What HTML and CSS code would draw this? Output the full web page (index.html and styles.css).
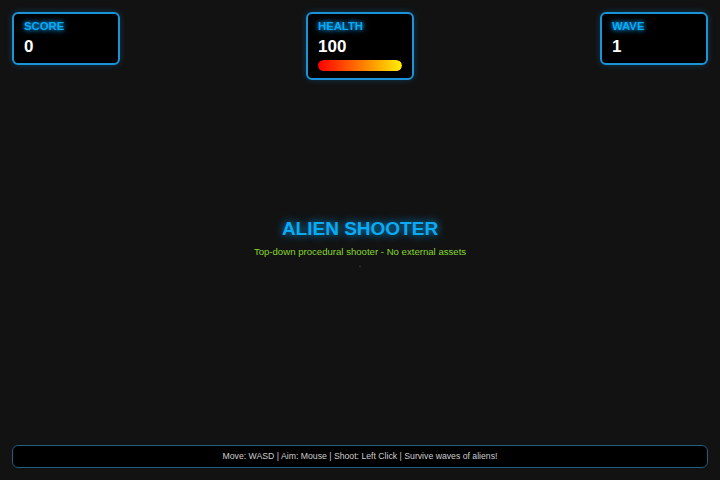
FILE: index.html
```html
<!DOCTYPE html>
<html lang="en">
<head>
<meta charset="utf-8">
<title>Alien Shooter</title>
<link rel="stylesheet" href="styles.css">
</head>
<body>
<div class="screen">
  <div class="hud">
    <div class="stat">
      <div class="label">SCORE</div>
      <div class="value">0</div>
    </div>
    <div class="stat">
      <div class="label">HEALTH</div>
      <div class="value">100</div>
      <div class="bar"><div class="bar-fill" style="width:100%"></div></div>
    </div>
    <div class="stat">
      <div class="label">WAVE</div>
      <div class="value">1</div>
    </div>
  </div>
  <div class="overlay">
    <h1 class="title">ALIEN SHOOTER</h1>
    <p class="subtitle">Top-down procedural shooter - No external assets</p>
    <p class="loading">.</p>
  </div>
  <div class="footer">Move: WASD | Aim: Mouse | Shoot: Left Click | Survive waves of aliens!</div>
</div>
</body>
</html>
```
FILE: styles.css
```css
* { box-sizing: border-box; }
html, body {
  margin: 0;
  padding: 0;
  background: #111111;
  font-family: "Liberation Sans", Arial, sans-serif;
}
.screen {
  width: 720px;
  height: 480px;
  display: grid;
  grid-template: 1fr / 1fr;
  background: #121212;
}
.screen > * { grid-area: 1 / 1; }
.hud {
  align-self: start;
  display: flex;
  justify-content: space-between;
  align-items: flex-start;
  padding: 12px 12px 0;
}
.stat {
  width: 108px;
  background: #000;
  border: 2px solid #1b93d8;
  border-radius: 6px;
  padding: 6px 10px 7px;
  box-shadow: 0 0 6px rgba(0, 170, 255, 0.25);
}
.label {
  font-size: 11.3px;
  line-height: 13px;
  font-weight: bold;
  color: #0aaaf5;
  text-shadow: 0 0 4px rgba(0, 170, 255, 1), 0 0 8px rgba(0, 170, 255, 0.6);
  margin-bottom: 4px;
}
.value {
  font-size: 17px;
  line-height: 19px;
  font-weight: bold;
  color: #fff;
}
.bar {
  margin-top: 4px;
  height: 11px;
  border-radius: 6px;
  overflow: hidden;
  background: #300;
}
.bar-fill {
  height: 100%;
  border-radius: 6px;
  background: linear-gradient(to right, #ff0000, #ffee00);
}
.overlay {
  align-self: center;
  text-align: center;
  padding-top: 8px;
}
.title {
  margin: 0 0 6px;
  font-size: 19px;
  line-height: 22px;
  font-weight: bold;
  color: #0aaaf5;
  text-shadow: 0 0 8px rgba(0, 170, 255, 0.9);
}
.subtitle {
  margin: 0;
  font-size: 9.6px;
  line-height: 12px;
  color: #86d62c;
}
.loading {
  margin: 0;
  font-size: 10px;
  line-height: 12px;
  color: #555;
}
.footer {
  align-self: end;
  margin: 0 12px 12px;
  height: 23px;
  background: #000;
  border: 1px solid #1d5f7c;
  border-radius: 6px;
  font-size: 8.7px;
  line-height: 21px;
  text-align: center;
  color: #cccccc;
}
```
